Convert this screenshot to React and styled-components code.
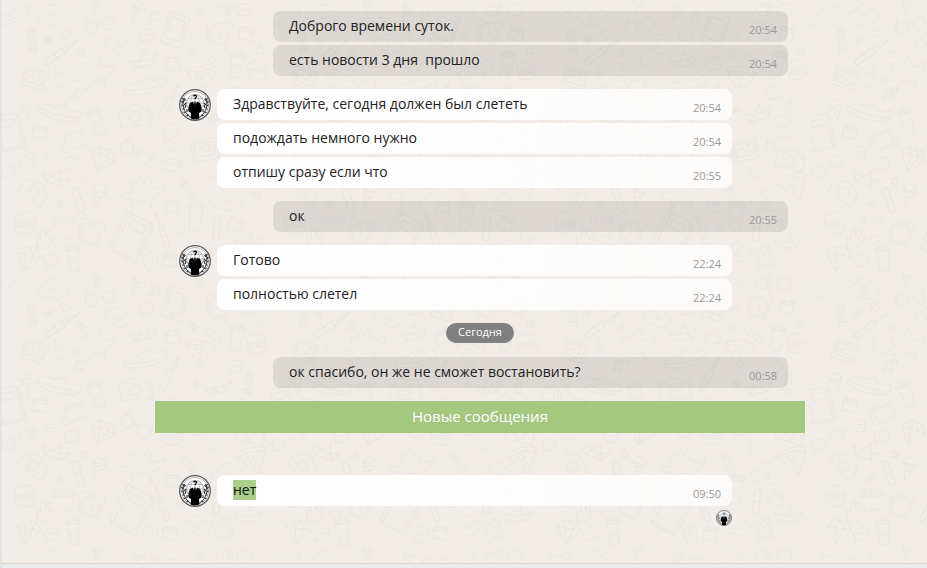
import React from 'react';
import styled, { createGlobalStyle } from 'styled-components';

const GlobalStyle = createGlobalStyle`
  body {
    margin: 0;
    background: #f2ede8;
    font-family: 'Open Sans', 'Noto Sans', sans-serif;
  }
  * {
    box-sizing: border-box;
  }
`;

const Page = styled.div`
  position: relative;
  display: flex;
  flex-direction: column;
  min-height: 100vh;
  overflow: hidden;
  border-left: 2px solid #e0e3e2;
`;

const Backdrop = styled.svg`
  position: absolute;
  inset: 0;
  width: 100%;
  height: 100%;
`;

const Chat = styled.main`
  position: relative;
  flex: 1;
  display: flex;
  flex-direction: column;
  gap: 13px;
  padding: 11px 122px 36px 153px;
`;

const Footer = styled.footer`
  position: relative;
  height: 5px;
  border-top: 1px solid #d5d5d5;
  background: #ebebeb;
`;

const Group = styled.section`
  display: flex;
  align-items: flex-start;
  gap: 6px;
  padding: ${({ $out }) => ($out ? '0 17px 0 118px' : '0 73px 0 24px')};
`;

const Messages = styled.div`
  flex: 1;
  display: flex;
  flex-direction: column;
  gap: 3px;
`;

const Bubble = styled.div`
  display: flex;
  justify-content: space-between;
  min-height: 31px;
  padding: 0 11px 0 16px;
  border-radius: 8px;
  background: ${({ $out }) => ($out
    ? 'rgba(0, 0, 0, 0.085)'
    : 'linear-gradient(to right, #fff, rgba(255, 255, 255, 0.8))')};
`;

const Text = styled.p`
  margin: 0;
  padding-top: 5px;
  font-size: 14px;
  line-height: 20px;
  color: #222;
  white-space: pre-wrap;
`;

const Selected = styled.mark`
  display: inline-block;
  background: #a9cf8b;
  color: #111;
`;

const Time = styled.time`
  padding-top: 11px;
  font-size: 11px;
  line-height: 16px;
  color: #999;
`;

const DayPill = styled.div`
  align-self: center;
  height: 20px;
  margin-bottom: 1px;
  padding: 0 12px;
  border-radius: 10px;
  background: #808080;
  color: #fff;
  font-size: 11px;
  line-height: 18px;
`;

const NewMessages = styled.div`
  height: 32px;
  margin-bottom: 29px;
  background: rgba(139, 187, 94, 0.75);
  color: #fff;
  font-size: 15px;
  line-height: 31px;
  text-align: center;
`;

const Seen = styled.div`
  display: flex;
  justify-content: flex-end;
  padding-top: 1px;
`;

const Emblem = styled.svg`
  flex: none;
  display: block;
  width: ${({ $size }) => $size}px;
  height: ${({ $size }) => $size}px;
`;

const Avatar = ({ size = 32 }) => (
  <Emblem $size={size} viewBox="0 0 32 32" role="img" aria-label="Аватар">
    <circle cx="16" cy="16" r="15.3" fill="#fff" stroke="#5a5a5a" strokeWidth="1.3" />
    <circle cx="16" cy="16" r="13.6" fill="none" stroke="#999" strokeWidth="0.7" />
    <g fill="none" stroke="#aaa" strokeWidth="0.8">
      <circle cx="16" cy="14" r="8.5" stroke="#888" />
      <ellipse cx="16" cy="14" rx="4.5" ry="8.5" />
      <path d="M16 5.500v17M7.500 14h17M9 9.500h14M9 18.500h14" />
    </g>
    <g fill="none" stroke="#333">
      <path d="M5.500 9C2.500 15 4 23 12 28.500M26.500 9c3 6 1.500 14-6.500 19.500" strokeWidth="1" />
      <path
        d="M5 11l-1.500-2M4.500 14L2.500 12M4.500 17L2.500 16M5.500 20L3.500 20M7 23l-2.500.5M10 26l-2.500 1M5 12l1.500-2M5 16l2-2M6 19l1-3M8 23v-3M27 11l1.500-2M27.500 14l2-2M27.500 17l2-1M26.500 20h2M25 23l2.500.5M22 26l2.500 1M27 12l-1.500-2M27 16l-2-2M26 19l-1-3M24 23v-3"
        strokeWidth="1.2"
      />
    </g>
    <path
      d="M14 12.500L11 14C9.800 16 9 20 9.500 22.500l2.500 1.500L11.800 29.500Q16 31.500 20.300 29.500L20 24l2.500-1.500C23 20 22.200 16 21 14l-3-1.500-2 5z"
      fill="#000"
    />
    <path d="M15.500 12.500h1l.5 4-1 2-1-2z" fill="#000" />
    <path d="M14.600 7.400c.4-1.400 3-1.300 2.900.2 0 1-1.500 1.200-1.500 2.600" fill="none" stroke="#000" strokeWidth="1.200" />
  </Emblem>
);

// outlines for the wallpaper, each drawn round its own centre
const shapes = {
  cloud: 'M-35 20C-60 15-45-15-25-10C-20-38 20-38 22-14C50-18 55 18 32 20C25 38-5 36-8 24C-18 32-30 30-35 20zM-8 5a8 8 0 1 0 16 0a8 8 0 1 0-16 0',
  cone: 'M-18-10L2 42L20-10M-20-10C-24-34 22-36 20-10zM-12 4L12-8M-6 18L16 2M-14-8L10 14',
  glasses: 'M-45 5a18 18 0 1 0 36 0a18 18 0 1 0-36 0M8 5a18 18 0 1 0 36 0a18 18 0 1 0-36 0M-9 3Q0-6 8 3M-45 0L-35-25M44 0L38-25',
  note: 'M-10 14V-14L14-18V10M-10-6L14-10M-22 16a6 5 0 1 0 12 0a6 5 0 1 0-12 0M2 12a6 5 0 1 0 12 0a6 5 0 1 0-12 0',
  phone: 'M-22-42h44q6 0 6 6v72q0 6-6 6h-44q-6 0-6-6v-72q0-6 6-6zM-20-30h40v56h-40zM-6 34h12',
  clock: 'M-34 0a34 34 0 1 0 68 0a34 34 0 1 0-68 0M-26 0a26 26 0 1 0 52 0a26 26 0 1 0-52 0M0-16V0L12 8M-34-18C-50-32-26-50-16-36M34-18C50-32 26-50 16-36M-22 28l-8 12M22 28l8 12',
  bubble: 'M-16 10C-32-6-14-18 0-17C24-18 26 12 4 14L-16 18zM-9-1h2M0-1h2M9-1h2',
  heart: 'M0 12L-14-2C-16-16-2-18 0-7C4-18 18-14 13-1z',
  flower: 'M-5 0a5 5 0 1 0 10 0a5 5 0 1 0-10 0M0-5V-17M0 5V17M-5 0H-17M5 0H17M-4-4L-12-12M4 4L12 12M4-4L12-12M-4 4L-12 12',
  pencil: 'M-12 40V-28L0-44L12-28V40zM-12-28H12M-12 30H12M-4-28V30M4-28V30',
  pen: 'M-7 55L-9-5L0-22L9-5L7 55zM-9-5H9M-5-22L0-58L5-22M-8 20H8',
  boat: 'M-42 0L-15 6L6-22L14 8L42-6L24 24H-28zM-15 6L-28 24M14 8L24 24M-15 6H14',
  cup: 'M-20-28L-14 42H14L20-28zM-24-38H24V-28H-24zM-14-38L-10-46H10L14-38M-9 6a9 9 0 1 0 18 0a9 9 0 1 0-18 0',
  box: 'M-20-16H20V20H-20zM-20-6H20M-10-22V-12M10-22V-12',
  star: 'M0-14L4-4L14-4L6 3L9 13L0 7L-9 13L-6 3L-14-4L-4-4z',
  pill: 'M-8-24a8 8 0 0 1 16 0V24a8 8 0 0 1-16 0zM-8 0H8',
  picture: 'M-34-28H34V28H-34zM-26-20H26V16H-26zM-26 10L-10-8L4 8L12 0L26 14M8-12a4 4 0 1 0 8 0a4 4 0 1 0-8 0',
  paw: 'M-10 12C-16 0-6-6 0-6C8-6 16 2 10 12Q0 18-10 12zM-16-8v-6M-6-14v-8M6-14v-8M16-8v-6M-4 3h8',
  unicorn: 'M-70 25C-50 5-35 20-30 0C-55-10-40-35-25-20C-20-55 0-40-4-25C10-60 25-40 12-18C40-20 35-5 62-30C58 5 35 8 28 20L34 48L18 22C0 30-4 22-14 32L-26 60L-30 28C-50 24-52 38-70 25z',
  pizza: 'M-48-26Q0-52 48-26L6 44zM-42-16Q0-38 40-14M-14-8a9 9 0 1 0 18 0a9 9 0 1 0-18 0M-4 18a7 7 0 1 0 14 0a7 7 0 1 0-14 0',
  shoe: 'M-66 18C-60-10-40-8-20-10L10-28L24-10L60-22C76-4 60 16 40 18C0 30-40 32-66 18zM-66 10C-20 18 40 10 64-2M-20-10L-8 2M-8-16L2-4M4-22L14-10',
  camera: 'M-44-24H-22L-14-36H14L22-24H44V28H-44zM-20 2a20 20 0 1 0 40 0a20 20 0 1 0-40 0M-12 2a12 12 0 1 0 24 0a12 12 0 1 0-24 0M-36-16h10M30-16h8M44-16q16 30 0 54',
  book: 'M-34-50H34V50H-34zM-24-50V50M-14-36H24V-16H-14zM34-44H42V56H-26V50',
  diamond: 'M-38-10L-20-34H20L38-10L0 38zM-38-10H38M-20-34L-12-10L0 38L12-10L20-34M-12-10L0-34L12-10',
  burger: 'M-32-6C-34-42 34-42 32-6zM-34 0Q-20 12-8 0Q4 12 14 0Q26 12 34 0M-32 12H32Q30 32 0 32Q-30 32-32 12M-12-24v2M4-22v2M14-16v2',
  hand: 'M-12 32L-26 4Q-22-4-12 6L-18-24Q-10-34-6-22L0-4V-30Q8-38 10-26V0L22-18Q30-18 26-8L18 22Q10 36-12 32z',
  pin: 'M0 30C-34-4-20-28 0-28C20-28 34-4 0 30zM-8-6a8 8 0 1 0 16 0a8 8 0 1 0-16 0',
};

// name, x, y, angle, scale
const doodles = [
  ['shoe', 40, 45, -15, 0.8], ['cloud', 160, 45, 0, 1], ['cone', 290, 12, 10, 0.7],
  ['glasses', 300, 72, -12, 1], ['cone', 412, 30, 25, 0.9], ['note', 465, 50, 0, 0.9],
  ['phone', 525, 90, 18, 1.15], ['clock', 655, 102, 8, 1], ['bubble', 440, 105, 0, 1.1],
  ['cloud', 355, 130, 15, 0.9], ['heart', 195, 102, 15, 1], ['heart', 585, 110, -10, 0.8],
  ['flower', 145, 122, 15, 1], ['pencil', 95, 120, -8, 0.9], ['pen', 185, 155, 55, 1.1],
  ['boat', 430, 175, -10, 1], ['cup', 710, 195, 12, 0.9], ['box', 518, 190, -8, 1],
  ['star', 245, 160, 5, 0.9], ['star', 578, 160, 15, 0.9], ['pill', 640, 185, -50, 1],
  ['picture', 105, 235, 18, 1], ['paw', 180, 215, 10, 1], ['unicorn', 285, 215, 0, 1],
  ['pizza', 600, 240, 8, 1], ['shoe', 435, 255, -5, 1], ['heart', 182, 270, 0, 1],
  ['note', 235, 278, 5, 0.9], ['pen', 510, 300, 28, 1], ['cone', 77, 325, -8, 0.9],
  ['shoe', 178, 333, 20, 1], ['cup', 290, 365, -20, 0.9], ['camera', 405, 350, -5, 1],
  ['book', 25, 395, -12, 1], ['box', 120, 395, 10, 1], ['phone', 218, 422, 70, 0.9],
  ['pin', 510, 400, 30, 1], ['glasses', 410, 455, 30, 1.1], ['paw', 150, 460, 0, 1.1],
  ['diamond', 307, 478, 20, 1], ['burger', 515, 482, 10, 1], ['picture', 615, 450, -10, 1.1],
  ['hand', 85, 480, 60, 0.8], ['bubble', 215, 490, 0, 1.1], ['bubble', 28, 515, 0, 1],
  ['boat', 170, 530, 20, 1], ['star', 253, 543, 10, 0.9], ['cone', 295, 580, 20, 1],
  ['unicorn', 430, 575, 10, 1], ['pencil', 565, 570, -35, 0.8], ['camera', 100, 575, 35, 0.9],
  ['pill', 235, 600, -20, 1.2], ['flower', 180, 612, 0, 1], ['cloud', 680, 600, 0, 1],
  ['box', 518, 620, 0, 0.9], ['pencil', 190, 660, 90, 0.9], ['burger', 75, 668, 0, 1],
  ['clock', 270, 700, 15, 1], ['book', 392, 705, 28, 1.2], ['pen', 485, 690, -20, 1],
  ['cup', 587, 650, 5, 1], ['pill', 650, 685, 5, 1.2], ['box', 708, 672, 25, 1],
  ['hand', 135, 715, 20, 1], ['heart', 195, 722, 0, 1.1], ['paw', 540, 690, 0, 0.9],
  ['diamond', 85, 775, 10, 1], ['bubble', 155, 782, 0, 1.1], ['cup', 220, 776, -5, 0.9],
  ['pin', 450, 785, 10, 1], ['box', 510, 778, 5, 1], ['cloud', 590, 755, 0, 0.9],
  ['picture', 670, 770, 70, 0.9], ['boat', 745, 720, 0, 1], ['pizza', 760, 560, -15, 1],
  ['note', 690, 435, 0, 1], ['camera', 750, 480, 15, 0.9], ['heart', 640, 360, 0, 1],
  ['bubble', 705, 280, 0, 1.1], ['boat', 655, 335, -10, 1], ['pencil', 745, 325, 5, 0.8],
  ['flower', 590, 330, 10, 0.9], ['cloud', 725, 380, 0, 1], ['paw', 640, 520, 0, 1],
  ['bubble', 735, 30, 0, 1.1], ['hand', 675, 28, 70, 0.8], ['paw', 600, 25, 0, 1],
  ['box', 740, 100, 15, 1], ['star', 780, 150, 0, 1], ['burger', 770, 210, -10, 0.9],
];

const Wallpaper = () => (
  <Backdrop aria-hidden="true">
    <defs>
      <pattern id="doodles" width="810" height="820" patternUnits="userSpaceOnUse" patternTransform="translate(-2 0) scale(0.3334)">
        <g fill="none" stroke="#e8e3dd" strokeWidth="2.500" strokeLinejoin="round" strokeLinecap="round">
          {doodles.map(([name, x, y, angle, scale]) => (
            <path
              key={`${x}-${y}`}
              d={shapes[name]}
              transform={`translate(${x} ${y}) rotate(${angle}) scale(${scale})`}
            />
          ))}
        </g>
      </pattern>
    </defs>
    <rect width="100%" height="100%" fill="url(#doodles)" />
  </Backdrop>
);

const MessageGroup = ({ out = false, items, seen = false }) => (
  <Group $out={out}>
    {!out && <Avatar />}
    <Messages>
      {items.map(({ text, time, selected }) => (
        <Bubble key={text} $out={out}>
          <Text>{selected ? <Selected>{text}</Selected> : text}</Text>
          <Time>{time}</Time>
        </Bubble>
      ))}
      {seen && (
        <Seen>
          <Avatar size={16} />
        </Seen>
      )}
    </Messages>
  </Group>
);

const App = () => (
  <>
    <GlobalStyle />
    <Page>
      <Wallpaper />
      <Chat>
        <MessageGroup
          out
          items={[
            { text: 'Доброго времени суток.', time: '20:54' },
            { text: 'есть новости 3 дня  прошло', time: '20:54' },
          ]}
        />
        <MessageGroup
          items={[
            { text: 'Здравствуйте, сегодня должен был слететь', time: '20:54' },
            { text: 'подождать немного нужно', time: '20:54' },
            { text: 'отпишу сразу если что', time: '20:55' },
          ]}
        />
        <MessageGroup out items={[{ text: 'ок', time: '20:55' }]} />
        <MessageGroup
          items={[
            { text: 'Готово', time: '22:24' },
            { text: 'полностью слетел', time: '22:24' },
          ]}
        />
        <DayPill>Сегодня</DayPill>
        <MessageGroup
          out
          items={[{ text: 'ок спасибо, он же не сможет востановить?', time: '00:58' }]}
        />
        <NewMessages>Новые сообщения</NewMessages>
        <MessageGroup seen items={[{ text: 'нет', time: '09:50', selected: true }]} />
      </Chat>
      <Footer />
    </Page>
  </>
);

export default App;
